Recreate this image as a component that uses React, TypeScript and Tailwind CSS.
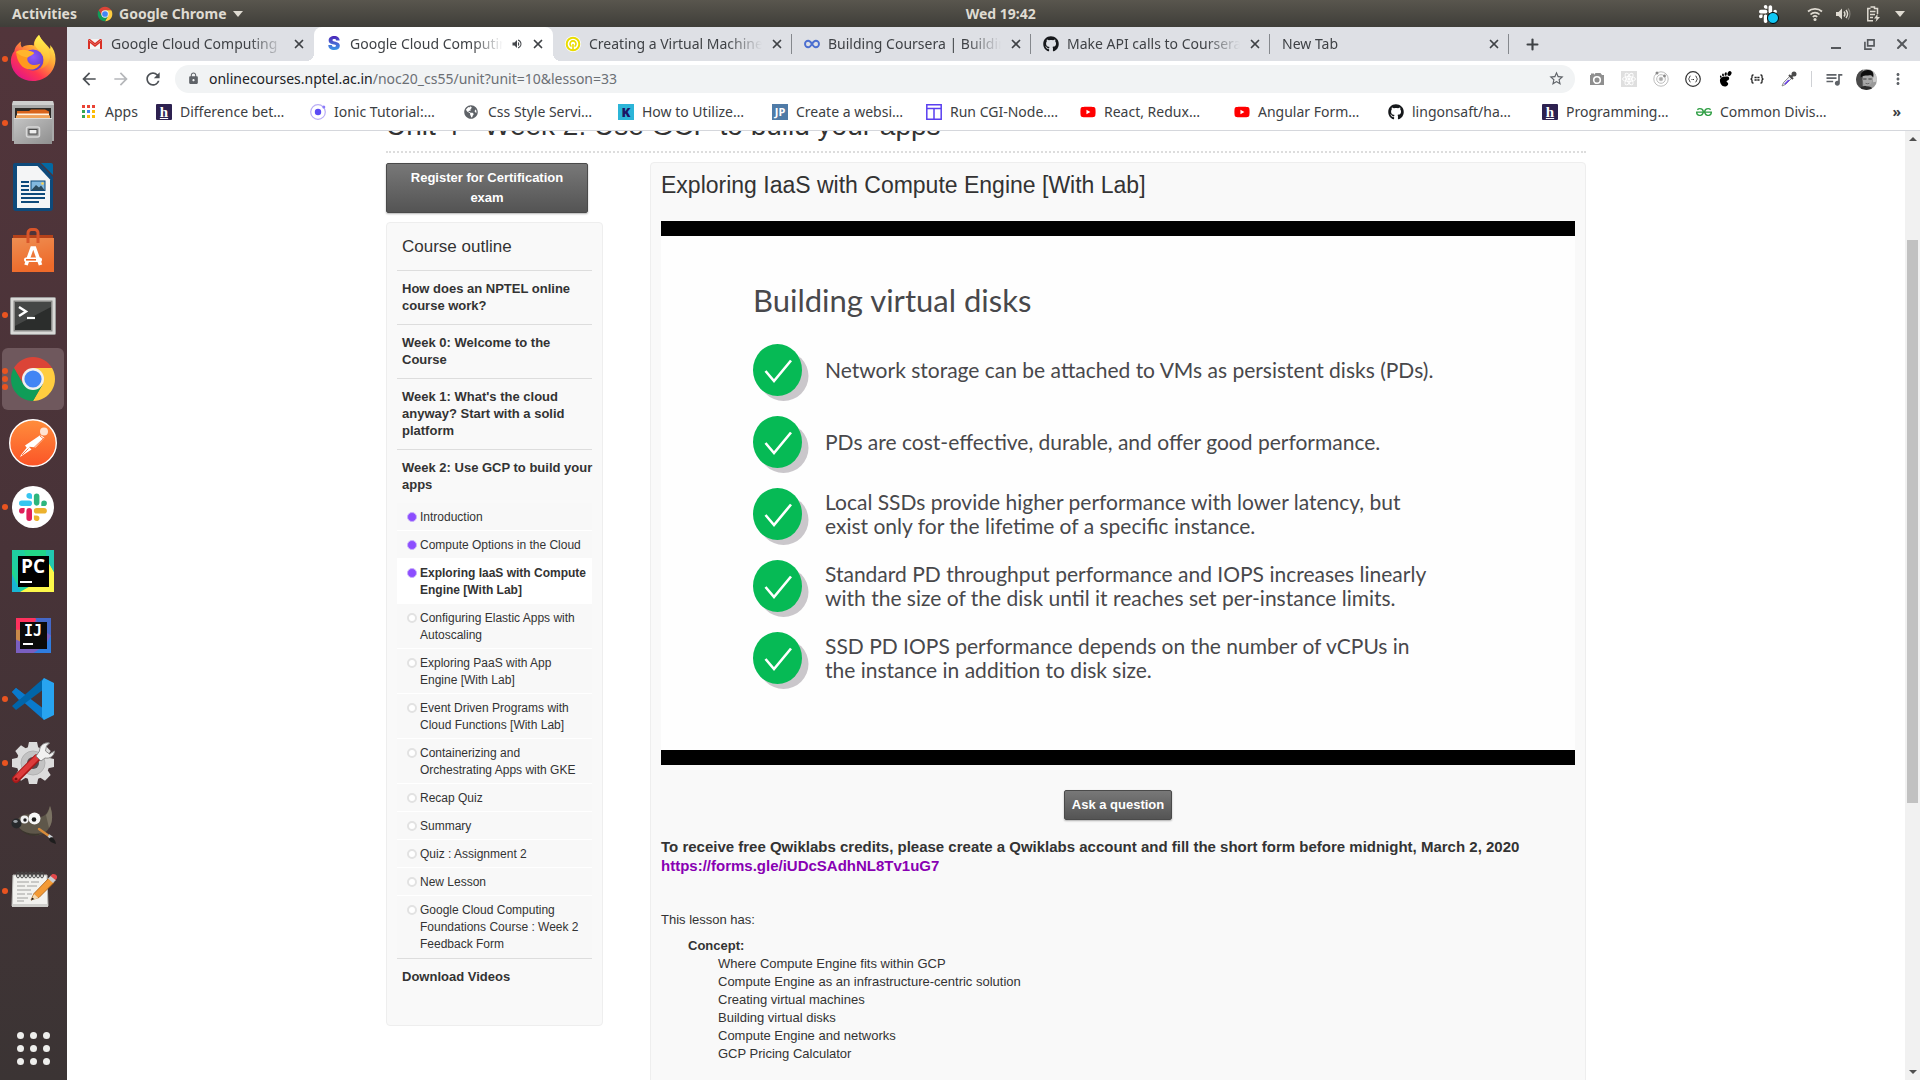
import React from "react";
import { Plus, X } from "lucide-react";
import { FaGithub, FaYoutube, FaGlobeAmericas } from "react-icons/fa";
import { SiGeeksforgeeks } from "react-icons/si";
import {
  MdArrowBack,
  MdArrowForward,
  MdRefresh,
  MdLock,
  MdStarBorder,
  MdQueueMusic,
  MdMoreVert,
  MdVolumeUp,
} from "react-icons/md";

/* ---------- Logos ---------- */

function ChromeLogo({ className }: { className: string }) {
  return (
    <svg viewBox="0 0 48 48" className={className} aria-hidden="true">
      <path d="M4.95 13A22 22 0 0 1 43.05 13H24L14.47 29.5Z" fill="#db4437" />
      <path d="M43.05 13A22 22 0 0 1 24 46L33.53 29.5L24 13Z" fill="#ffcd40" />
      <path d="M24 46A22 22 0 0 1 4.95 13L14.47 29.5H33.53Z" fill="#0f9d58" />
      <circle cx="24" cy="24" r="11" fill="#f1f1f1" />
      <circle cx="24" cy="24" r="8.6" fill="#4285f4" />
    </svg>
  );
}

function SlackMark({ className, colors }: { className: string; colors: [string, string, string, string] }) {
  const [blue, green, yellow, red] = colors;
  return (
    <svg viewBox="0 0 54 54" className={className} aria-hidden="true">
      <path d="M19.7.1a5.4 5.4 0 0 0 0 10.8h5.4V5.5A5.4 5.4 0 0 0 19.7.1m0 14.4H5.4a5.4 5.4 0 0 0 0 10.8h14.3a5.4 5.4 0 0 0 0-10.8" fill={blue} />
      <path d="M53.8 19.9a5.4 5.4 0 0 0-10.8 0v5.4h5.4a5.4 5.4 0 0 0 5.4-5.4m-14.4 0V5.5a5.4 5.4 0 0 0-10.7 0v14.4a5.4 5.4 0 0 0 10.7 0" fill={green} />
      <path d="M34 54a5.4 5.4 0 0 0 0-10.8h-5.3v5.4A5.4 5.4 0 0 0 34 54m0-14.4h14.4a5.4 5.4 0 0 0 0-10.8H34a5.4 5.4 0 0 0 0 10.8" fill={yellow} />
      <path d="M0 34.2a5.4 5.4 0 0 0 10.8 0v-5.4H5.4A5.4 5.4 0 0 0 0 34.2m14.3 0v14.4a5.4 5.4 0 0 0 10.8 0V34.2a5.4 5.4 0 0 0-10.8 0" fill={red} />
    </svg>
  );
}

function FirefoxLogo() {
  return (
    <svg viewBox="0 0 48 48" className="size-12" aria-hidden="true">
      <defs>
        <linearGradient id="ff-body" x1="0.85" y1="0.1" x2="0.2" y2="0.95">
          <stop offset="0" stopColor="#fff44f" />
          <stop offset="0.35" stopColor="#ffa436" />
          <stop offset="0.7" stopColor="#ff3750" />
          <stop offset="1" stopColor="#e31587" />
        </linearGradient>
        <linearGradient id="ff-flame" x1="0.5" y1="0" x2="0.4" y2="1">
          <stop offset="0" stopColor="#fff44f" />
          <stop offset="0.6" stopColor="#ffc53a" />
          <stop offset="1" stopColor="#ff8a1f" />
        </linearGradient>
        <radialGradient id="ff-globe" cx="0.5" cy="0.35" r="0.7">
          <stop offset="0" stopColor="#9059ff" />
          <stop offset="1" stopColor="#5b3ac2" />
        </radialGradient>
      </defs>
      <path d="M30 0c-4 4-5.500 7-5 10.500-6-1-10 0-12 2-1.500-2-1.500-4-1-6C7 10 5.500 14 5.500 16 2.500 19 1.500 24 2 28c1.500 11 11 18 22 18 13 0 22.500-10 22.500-22 0-6-2-10.500-5.500-14 .5 2 .4 3 0 4C38.500 10 33 6 30 0z" fill="url(#ff-body)" />
      <circle cx="24" cy="25" r="10.500" fill="url(#ff-globe)" />
      <path d="M30 0c-4 4-5 8-3.500 11.500 2 3.500 7 5.500 8 11.500 1 5-1 9-4 11 6-1 10-6 10.500-12C41 13 33 7 30 0z" fill="url(#ff-flame)" />
      <path d="M7 17c4-2.500 8-3 11.500-1.500 2.500 1 5 1 6.500 2.500-1 2-5 3-6.500 4.500-1 4 2 7 6 7.500 3.500.3 5-1 7-1.500-2 4-6 6.500-10.500 6C13 34 8 27 7 17z" fill="#ff9a1f" />
      <path d="M7 17c4-2.500 8-3 11.500-1.500 2.500 1 5 1 6.500 2.500-1 2-5 3-6.500 4.500C14 22 10 20 7 17z" fill="#ffb52e" />
    </svg>
  );
}

function FilesLogo() {
  return (
    <svg viewBox="0 0 48 48" className="size-12" aria-hidden="true">
      <defs>
        <linearGradient id="files-face" x1="0" y1="0" x2="1" y2="1">
          <stop offset="0" stopColor="#c4c4c4" />
          <stop offset="1" stopColor="#8f8f8f" />
        </linearGradient>
      </defs>
      <path d="M4 2h40l1 4v36H3V6z" fill="#a9a9a9" />
      <path d="M4 2h40l1 4H3z" fill="#cfcfcf" />
      <path d="M6 9h36v11H6z" fill="#2d2a28" />
      <path d="M8 12h12l2-1.500h14l4 2V20H8z" fill="#d9641c" />
      <path d="M8 14.500h32v2H8z" fill="#fff3e0" />
      <path d="M7 16.500h34V20H7z" fill="#f0a35a" />
      <path d="M5 19h38v26H5z" fill="url(#files-face)" />
      <path d="M5 19h38v1H5z" fill="#dedede" />
      <rect x="17.500" y="28" width="13" height="10" rx="2" fill="#a0a0a0" stroke="#d8d8d8" strokeWidth="1.500" />
      <rect x="20" y="30.500" width="8" height="4.500" fill="#eee" stroke="#4a4a4a" />
    </svg>
  );
}

function WriterLogo() {
  return (
    <svg viewBox="0 0 48 48" className="size-12" aria-hidden="true">
      <path d="M6 0h24.500L44 14v31a3 3 0 0 1-3 3H7a3 3 0 0 1-3-3V2a2 2 0 0 1 2-2z" fill="#0e4a7b" />
      <path d="M32 0h10a2 2 0 0 1 2 2v10z" fill="#0369a3" />
      <path d="M8 3h20.500L41 16.500V45H8z" fill="#f4f5f6" />
      <path d="M12 18h8v2h-8zM12 22h8v2h-8zM12 26h8v2h-8zM12 30h24v2H12zM12 34h24v2H12zM12 38h18v2H12z" fill="#0e4a7b" />
      <rect x="22" y="18" width="14" height="9.500" fill="#83b8de" stroke="#0e4a7b" />
      <path d="M22.500 27l4.500-5 3 2.500 2-2 3.500 4.500z" fill="#2c4a5c" />
      <circle cx="33.500" cy="20.500" r="1.300" fill="#ffd34f" />
    </svg>
  );
}

function SoftwareLogo() {
  return (
    <svg viewBox="0 0 48 48" className="size-12" aria-hidden="true">
      <defs>
        <linearGradient id="bag" x1="0" y1="0" x2="0.3" y2="1">
          <stop offset="0" stopColor="#ee8e52" />
          <stop offset="1" stopColor="#ee6a2a" />
        </linearGradient>
      </defs>
      <path d="M4 8h40v8H4z" fill="#b5421a" />
      <path d="M3 11h42v34H3z" fill="url(#bag)" />
      <path d="M19 16V6a3.500 3.500 0 0 1 3.500-3.500h3A3.500 3.500 0 0 1 29 6v10" fill="none" stroke="#d8552a" strokeWidth="3" />
      <path d="M17 38l6-17h2.500l6 17" fill="none" stroke="#fff" strokeWidth="3.600" />
      <rect x="15" y="30.500" width="18" height="4.500" rx="2" fill="#fff" />
      <rect x="17" y="32" width="10" height="1.600" fill="#ee6a2a" />
    </svg>
  );
}

function TerminalLogo() {
  return (
    <svg viewBox="0 0 48 48" className="size-12" aria-hidden="true">
      <rect x="1.500" y="6.500" width="45" height="37" rx="1" fill="#d9d9d7" stroke="#9b9b9b" />
      <rect x="4.500" y="9.500" width="39" height="31" fill="#8a8a88" />
      <rect x="6" y="11" width="36" height="28" fill="#2b2d2c" />
      <path d="M6 11h36v5L6 35z" fill="#454746" />
      <path d="M10 16l7 4.500-7 4.500" fill="none" stroke="#fff" strokeWidth="2.400" />
      <path d="M18 27h8" stroke="#fff" strokeWidth="2.200" />
    </svg>
  );
}

function PostmanLogo() {
  return (
    <svg viewBox="0 0 48 48" className="size-12" aria-hidden="true">
      <defs>
        <linearGradient id="postman" x1="0" y1="0" x2="0" y2="1">
          <stop offset="0" stopColor="#ff8e3c" />
          <stop offset="1" stopColor="#fb5427" />
        </linearGradient>
      </defs>
      <circle cx="24" cy="24" r="23.300" fill="url(#postman)" stroke="#fff" strokeWidth="1.400" />
      <circle cx="35" cy="12.500" r="4" fill="#ffe3d2" />
      <path d="M32.500 16.500l3 2.500-9 9.500-8-1z" fill="#fff" />
      <path d="M31.500 16L16 26.500l2 2.500 13-8z" fill="#fff" />
      <path d="M19 27l3.500 3.500L11 38l1-2z" fill="#fff" />
      <path d="M35 19l-11 10.500M19.500 29.500L13 36M31 17l3 2.500" stroke="#fb7a45" fill="none" />
    </svg>
  );
}

function PyCharmLogo() {
  return (
    <span className="relative flex h-[42px] w-[42px] items-center justify-center">
      <svg viewBox="0 0 42 42" className="absolute inset-0 size-full" aria-hidden="true">
        <path d="M0 0h42v42H0z" fill="#21d789" />
        <path d="M0 14L8 42h14L12 0H0z" fill="#1fcfa0" />
        <path d="M0 24l9 18H0z" fill="#18b6d4" />
        <path d="M8 42l14-8 12-26 8 14v20z" fill="#fcf84a" />
        <path d="M34 0h8v22l-8-14z" fill="#22c8b0" />
      </svg>
      <span className="relative flex h-[31px] w-[31px] flex-col justify-between bg-black px-[2px] pb-1">
        <span className="font-['Open_Sans',sans-serif] text-[19px] leading-[20px] font-bold text-white">PC</span>
        <span className="h-[2px] w-3 bg-white" />
      </span>
    </span>
  );
}

function IntelliJLogo() {
  return (
    <span className="relative flex size-[35px] items-center justify-center">
      <svg viewBox="0 0 36 36" className="absolute inset-0 size-full" aria-hidden="true">
        <path d="M0 0h36v36H0z" fill="#7a5fc0" />
        <path d="M0 0h22L12 14H0z" fill="#fe315d" />
        <path d="M20 0h16v18L24 10z" fill="#4468c8" />
        <path d="M0 12h8v14L0 22z" fill="#c98a4a" />
        <path d="M36 18v18H18l12-8z" fill="#2f7de0" />
      </svg>
      <span className="relative flex size-[27px] flex-col justify-between bg-[#0b0b0b] px-[3px] pb-1">
        <span className="font-['DejaVu_Sans_Mono',monospace] text-[15px] leading-[18px] font-bold text-white">IJ</span>
        <span className="h-[2px] w-[10px] bg-white" />
      </span>
    </span>
  );
}

function CodeLogo() {
  return (
    <svg viewBox="0 0 48 48" className="size-12" aria-hidden="true">
      <path d="M3 17l4-4 28 21v11z" fill="#0a7acc" />
      <path d="M3 31l4 4L35 14V3z" fill="#0065a9" />
      <path d="M3 17l4-4 9 7-6 5z" fill="#0a7acc" />
      <path d="M35 3l10 5v32l-10 5-2-3V6z" fill="#28a4f0" />
    </svg>
  );
}

function SettingsLogo() {
  const teeth = [0, 45, 90, 135, 180, 225, 270, 315];
  return (
    <svg viewBox="0 0 48 48" className="size-12" aria-hidden="true">
      {teeth.map((a) => (
        <path key={a} d="M20 3h8l2 9H18z" fill="#dcdcdc" transform={`rotate(${a} 24 24)`} />
      ))}
      <circle cx="24" cy="24" r="16.500" fill="#dcdcdc" />
      <circle cx="24" cy="24" r="12" fill="#c3c3c3" stroke="#b2b2b2" />
      <circle cx="24" cy="24" r="6" fill="#55494c" />
      <path d="M7 40l21-21" stroke="#a81818" strokeWidth="7.500" strokeLinecap="round" />
      <path d="M7 39.500l21-21" stroke="#dd3b3b" strokeWidth="5" strokeLinecap="round" />
      <path d="M27 17l5 5 4-3c5 1 9-2 9.500-7l-5 3-4-3 1-5 3-3c-6-1-10 3-10 8z" fill="#f1f1f1" stroke="#8c8c8c" />
      <circle cx="7" cy="40" r="1.600" fill="#7a1010" />
    </svg>
  );
}

function GimpLogo() {
  return (
    <svg viewBox="0 0 48 48" className="size-12" aria-hidden="true">
      <path d="M9 16c3-4 8-6 14-3 5 2 11 2 15-3 1-2 2-4 3-7 3 8 3 16-1 22-4 7-13 9-20 6-6-2-9-5-11-8z" fill="#5e574a" />
      <path d="M37 12c2-2 3-5 4-9 3 8 3 16-1 22z" fill="#7a7263" />
      <path d="M11 26c5 4 13 6 23 4-6 4-17 4-23-4z" fill="#3b362d" />
      <ellipse cx="7.500" cy="20.500" rx="5" ry="5" fill="#26282b" />
      <ellipse cx="6.500" cy="18.500" rx="2.200" ry="1.400" fill="#9a9fa5" />
      <circle cx="15.500" cy="16.500" r="4" fill="#f0f0f0" />
      <circle cx="25.500" cy="15.500" r="6" fill="#f7f7f7" />
      <circle cx="16" cy="17" r="1.700" fill="#1c1c1c" />
      <circle cx="25" cy="16.500" r="2.300" fill="#1c1c1c" />
      <path d="M30 26l10 7" stroke="#d98b3a" strokeWidth="2.400" strokeLinecap="round" />
      <path d="M39.500 32.500l3.500 2.500" stroke="#c9ced3" strokeWidth="3" />
      <path d="M42 34c3 1 4.500 4 5 7-4-1-7-3-7-5z" fill="#1d1d1d" />
    </svg>
  );
}

function NotesLogo() {
  const rings = [9, 13, 17, 21, 25, 29, 33];
  return (
    <svg viewBox="0 0 48 48" className="size-12" aria-hidden="true">
      <path d="M4 8h34l1 31H3z" fill="#f2f2ef" stroke="#b9b9b6" />
      <path d="M3 37h36v3H3z" fill="#cfcfcc" />
      {rings.map((x) => (
        <ellipse key={x} cx={x} cy="8" rx="1.500" ry="3" fill="none" stroke="#4a4a4a" />
      ))}
      <path d="M8 15h12M22 15h8M8 19h8M18 19h10M8 23h14M8 27h8M18 27h5M8 31h11M8 34h7" stroke="#a0a09e" />
      <path d="M22 33l3-6.500L40 11l5 4.500-15 15z" fill="#f39a35" stroke="#a85c10" strokeWidth="0.800" />
      <path d="M25 27l-3 6.500 7.500-2.500z" fill="#f3d9b0" />
      <path d="M22 33.500l1.200-3 2 1.600z" fill="#1d1d1d" />
      <path d="M39 11.500l3-3 5 4.500-3 3z" fill="#c8ccd0" />
      <path d="M41.500 9c1.500-3 5-2.500 6.500 0 .5 1.500 0 2.500-1.500 4z" fill="#e0484a" />
    </svg>
  );
}

/* ---------- Top bar ---------- */

function TopBar() {
  return (
    <header className="flex h-[27px] shrink-0 items-center justify-between bg-linear-to-b from-[#59564e] to-[#3f3e39] px-3 font-['Noto_Sans',sans-serif] text-[14px] font-bold text-[#dfdbd2]">
      <div className="flex items-center gap-5">
        <button type="button">Activities</button>
        <button type="button" className="flex items-center gap-[6px]">
          <ChromeLogo className="size-4" />
          <span>Google Chrome</span>
          <Triangle />
        </button>
      </div>
      <button type="button">Wed 19:42</button>
      <div className="flex items-center">
        <span className="relative mr-[30px] flex">
          <SlackMark className="size-[18px]" colors={["#fff", "#fff", "#fff", "#fff"]} />
          <span className="absolute top-[7px] left-2 size-3 rounded-full border border-black bg-[#11c8f5]" />
        </span>
        <svg viewBox="0 0 16 16" className="mr-3 size-4" fill="none" stroke="currentColor" aria-hidden="true">
          <path d="M1 5.500a10.500 10.500 0 0 1 14 0M3.500 8.500a6.500 6.500 0 0 1 9 0M5.800 11a3.200 3.200 0 0 1 4.400 0" strokeWidth="1.700" />
          <circle cx="8" cy="13.500" r="1.500" fill="currentColor" stroke="none" />
        </svg>
        <svg viewBox="0 0 16 16" className="mr-[14px] size-4" fill="none" stroke="currentColor" aria-hidden="true">
          <path d="M1 6h2.500L7 2.500v11L3.500 10H1z" fill="currentColor" stroke="none" />
          <path d="M9 5.500a4 4 0 0 1 0 5M11 4a6.500 6.500 0 0 1 0 8" strokeWidth="1.400" />
          <path d="M13 2.500a9 9 0 0 1 0 11" strokeWidth="1.300" opacity="0.4" />
        </svg>
        <svg viewBox="0 0 16 16" className="mr-[14px] size-4" fill="none" stroke="currentColor" strokeWidth="1.500" aria-hidden="true">
          <path d="M5.500 1h4v1.500h3V8M8 14.800H2.800V2.500H5.500M5 5.500h5.500M5 8.500h5M5 11.500h3" />
          <path d="M12.500 8L9 12.500h2.500L10.500 16l4.500-5h-2.500z" fill="currentColor" stroke="none" />
        </svg>
        <span className="mr-[3px]">
          <Triangle />
        </span>
      </div>
    </header>
  );
}

function Triangle() {
  return (
    <svg viewBox="0 0 10 6" className="h-[6px] w-[10px]" aria-hidden="true">
      <path d="M0 0h10L5 6z" fill="currentColor" />
    </svg>
  );
}

/* ---------- Dock ---------- */

const dockItems: { name: string; icon: React.ReactNode; dots: number; active?: boolean }[] = [
  { name: "Firefox", icon: <FirefoxLogo />, dots: 1 },
  { name: "Files", icon: <FilesLogo />, dots: 1 },
  { name: "LibreOffice Writer", icon: <WriterLogo />, dots: 0 },
  { name: "Ubuntu Software", icon: <SoftwareLogo />, dots: 0 },
  { name: "Terminal", icon: <TerminalLogo />, dots: 1 },
  { name: "Google Chrome", icon: <ChromeLogo className="size-12" />, dots: 3, active: true },
  { name: "Postman", icon: <PostmanLogo />, dots: 0 },
  {
    name: "Slack",
    icon: (
      <span className="flex size-[42px] items-center justify-center rounded-full bg-white">
        <SlackMark className="size-7" colors={["#36c5f0", "#2eb67d", "#ecb22e", "#e01e5a"]} />
      </span>
    ),
    dots: 1,
  },
  { name: "PyCharm", icon: <PyCharmLogo />, dots: 0 },
  { name: "IntelliJ IDEA", icon: <IntelliJLogo />, dots: 0 },
  { name: "Visual Studio Code", icon: <CodeLogo />, dots: 1 },
  { name: "Settings", icon: <SettingsLogo />, dots: 1 },
  { name: "GIMP", icon: <GimpLogo />, dots: 0 },
  { name: "Text Editor", icon: <NotesLogo />, dots: 1 },
];

function Dock() {
  return (
    <nav aria-label="Dock" className="flex w-[67px] shrink-0 flex-col bg-linear-to-b from-[#52353b] via-[#483338] to-[#3b3434]">
      {dockItems.map((item) => (
        <button
          key={item.name}
          type="button"
          aria-label={item.name}
          className="relative flex h-16 shrink-0 items-center justify-center p-px pr-[2px]"
        >
          <span
            className={
              item.active
                ? "flex size-[62px] items-center justify-center rounded-md bg-[#6f585d]"
                : "flex size-[62px] items-center justify-center"
            }
          >
            {item.icon}
          </span>
          <span className="absolute inset-y-0 left-[2px] flex flex-col items-center justify-center gap-[2px]">
            {Array.from({ length: item.dots }, (_, i) => (
              <span key={i} className="size-[6px] rounded-full bg-[#e95420]" />
            ))}
          </span>
        </button>
      ))}
      <button type="button" aria-label="Show Applications" className="mt-auto flex h-16 items-center justify-center pr-px">
        <span className="grid grid-cols-3 gap-[6px]">
          {Array.from({ length: 9 }, (_, i) => (
            <span key={i} className="size-[7px] rounded-full bg-[#eeeeec]" />
          ))}
        </span>
      </button>
    </nav>
  );
}

/* ---------- Tab strip ---------- */

function GmailIcon() {
  return (
    <svg viewBox="0 0 16 16" className="size-4 shrink-0" aria-hidden="true">
      <path d="M2 3h12v10H2z" fill="#f4f4f4" />
      <path d="M1 13V3.500l7 5.500 7-5.500V13h-2V7l-5 4-5-4v6z" fill="#d93025" />
      <path d="M1 3h2l5 4 5-4h2l-7 6z" fill="#d93025" />
    </svg>
  );
}

const tabs: { title: string; icon: React.ReactNode; active?: boolean; sep?: boolean }[] = [
  { title: "Google Cloud Computing", icon: <GmailIcon /> },
  {
    title: "Google Cloud Computing",
    icon: (
      <span className="w-4 shrink-0 bg-linear-to-b from-[#4a1fb8] to-[#2aa5ee] bg-clip-text text-center font-['Inter',sans-serif] text-[19px] leading-4 font-black text-transparent">
        S
      </span>
    ),
    active: true,
  },
  {
    title: "Creating a Virtual Machine",
    icon: (
      <svg viewBox="0 0 16 16" className="size-4 shrink-0" fill="none" aria-hidden="true">
        <circle cx="8" cy="8" r="8" fill="#fff" />
        <circle cx="8" cy="8" r="6.300" stroke="#e9dc00" strokeWidth="2" />
        <path d="M6.500 10.500a3 3 0 1 1 3 0M8 8v6" stroke="#e9dc00" strokeWidth="1.600" />
      </svg>
    ),
    sep: true,
  },
  {
    title: "Building Coursera | Building",
    icon: (
      <svg viewBox="0 0 16 16" className="size-4 shrink-0" fill="none" aria-hidden="true">
        <path d="M8 8C6.500 5.500 5.500 4.800 4.200 4.800a3.200 3.200 0 0 0 0 6.400C5.500 11.200 6.500 10.500 8 8s2.500-3.200 3.800-3.200a3.200 3.200 0 0 1 0 6.400C10.500 11.200 9.500 10.500 8 8z" stroke="#4c6fd0" strokeWidth="1.900" />
      </svg>
    ),
    sep: true,
  },
  { title: "Make API calls to Coursera", icon: <FaGithub className="size-4 shrink-0 text-[#16181b]" />, sep: true },
  { title: "New Tab", icon: null, sep: true },
];

function TabStrip() {
  return (
    <div className="flex h-[34px] shrink-0 bg-[#dee0e5] pl-2 text-[14px] text-[#3f4246]">
      <div role="tablist" className="flex min-w-0 flex-1">
        {tabs.map((tab, i) => (
          <div
            key={i}
            role="tab"
            aria-selected={!!tab.active}
            className={
              tab.active
                ? "relative flex max-w-[239px] min-w-0 flex-1 items-center gap-2 rounded-t-lg bg-white pr-[8px] pb-px pl-3"
                : "relative flex max-w-[239px] min-w-0 flex-1 items-center gap-2 pr-[8px] pb-px pl-3"
            }
          >
            {tab.icon}
            <span className="min-w-0 flex-1 overflow-hidden [mask-image:linear-gradient(to_right,#000_80%,transparent)] whitespace-nowrap">
              {tab.title}
            </span>
            {tab.active && <MdVolumeUp className="size-3 shrink-0 text-[#45484c]" />}
            <button type="button" aria-label="Close tab" className="shrink-0">
              <X className="size-[14px] text-[#3f4246]" strokeWidth={3} />
            </button>
            {tab.active && (
              <>
                <span className="absolute bottom-0 -left-2 size-2 bg-[radial-gradient(circle_at_0_0,#dee0e5_8px,white_8px)]" />
                <span className="absolute -right-2 bottom-0 size-2 bg-[radial-gradient(circle_at_100%_0,#dee0e5_8px,white_8px)]" />
              </>
            )}
            {tab.sep && <span className="absolute top-[7px] right-0 h-5 w-px bg-[#85888d]" />}
          </div>
        ))}
        <button type="button" aria-label="New tab" className="flex w-[46px] shrink-0 items-center justify-center">
          <Plus className="size-[17px]" strokeWidth={3} />
        </button>
      </div>
      <div className="flex items-center gap-[17px] pr-[10px] text-[#55585c]">
        <button type="button" aria-label="Minimize" className="flex h-4 w-4 items-end justify-center pb-[3px]">
          <span className="h-[2px] w-[10px] bg-current" />
        </button>
        <button type="button" aria-label="Restore" className="flex size-4 items-center justify-center">
          <svg viewBox="0 0 12 12" className="size-[11px]" fill="none" stroke="currentColor" strokeWidth="1.800" aria-hidden="true">
            <path d="M4 1h7v6.500H4zM1 3v8h7.500" />
          </svg>
        </button>
        <button type="button" aria-label="Close window">
          <X className="size-4" strokeWidth={3} />
        </button>
      </div>
    </div>
  );
}

/* ---------- Toolbar ---------- */

const extensions: { name: string; icon: React.ReactNode }[] = [
  {
    name: "Screenshot",
    icon: (
      <svg viewBox="0 0 16 16" className="size-4" aria-hidden="true">
        <path d="M1 4h1V2.500h3V4l1.500-2h5L13 4h2v10H1z" fill="#8f8f8f" />
        <circle cx="8" cy="9" r="3.300" fill="#8f8f8f" stroke="#fff" strokeWidth="1.600" />
      </svg>
    ),
  },
  {
    name: "React Developer Tools",
    icon: (
      <svg viewBox="0 0 16 16" className="size-4" fill="none" stroke="#fff" strokeWidth="0.900" aria-hidden="true">
        <path d="M0 0h16v16H0z" fill="#dfdfdf" stroke="none" />
        <ellipse cx="8" cy="8" rx="6.500" ry="2.500" />
        <ellipse cx="8" cy="8" rx="6.500" ry="2.500" transform="rotate(60 8 8)" />
        <ellipse cx="8" cy="8" rx="6.500" ry="2.500" transform="rotate(120 8 8)" />
        <circle cx="8" cy="8" r="1.200" fill="#fff" />
      </svg>
    ),
  },
  {
    name: "Orbit",
    icon: (
      <svg viewBox="0 0 16 16" className="size-4" fill="none" stroke="#bdbdbd" aria-hidden="true">
        <circle cx="8" cy="8" r="7.200" />
        <circle cx="8" cy="8" r="4.300" />
        <circle cx="8" cy="8" r="1.800" fill="#aaa" />
        <circle cx="4" cy="2" r="1.500" fill="#8a8a8a" stroke="none" />
        <circle cx="11.500" cy="5" r="1.400" fill="#8a8a8a" stroke="none" />
      </svg>
    ),
  },
  {
    name: "JSON Viewer",
    icon: (
      <svg viewBox="0 0 16 16" className="size-4" fill="none" stroke="#333" aria-hidden="true">
        <circle cx="8" cy="8" r="7.300" strokeWidth="1.200" />
        <path d="M5.500 5c-1.500 0-.5 2.500-2 3 1.500.5.500 3 2 3M10.500 5c1.500 0 .5 2.500 2 3-1.500.5-.5 3-2 3" />
        <path d="M6.500 8.500h3" strokeDasharray="1 0.500" />
      </svg>
    ),
  },
  {
    name: "GNOME Shell integration",
    icon: (
      <svg viewBox="0 0 16 16" className="size-4" fill="#000" aria-hidden="true">
        <path d="M10.500 5.500C13 6 12.500 9 10.500 9.500 9 10 9.500 11 10.500 11.500c1.500 1 .5 3.500-2 4C5 16 2.500 12 3 8.500 3.500 6 7 5 10.500 5.500z" />
        <ellipse cx="12.500" cy="2.500" rx="1.900" ry="2.500" transform="rotate(25 12.500 2.500)" />
        <ellipse cx="8.700" cy="3" rx="1.100" ry="1.800" transform="rotate(10 8.700 3)" />
        <ellipse cx="6" cy="4" rx="0.900" ry="1.500" transform="rotate(-5 6 4)" />
        <ellipse cx="3.800" cy="5.700" rx="0.800" ry="1.200" transform="rotate(-20 3.800 5.700)" />
      </svg>
    ),
  },
  {
    name: "JSON Formatter",
    icon: (
      <svg viewBox="0 0 16 16" className="size-4" fill="none" stroke="#222" strokeWidth="1.300" aria-hidden="true">
        <path d="M4.500 4H4Q3 4 3 5v1.500Q3 8 1.500 8 3 8 3 9.500V11q0 1 1 1h.5M11.500 4h.5q1 0 1 1v1.500Q13 8 14.500 8 13 8 13 9.500V11q0 1-1 1h-.5" />
        <path d="M5.500 6.500h5M5.500 9h5" strokeDasharray="2.200 0.600" />
      </svg>
    ),
  },
  {
    name: "Color picker",
    icon: (
      <svg viewBox="0 0 16 16" className="size-4" fill="none" aria-hidden="true">
        <path d="M1 15l1.500-3.500L9 5l2 2-6.500 6.500z" fill="#e8e8ef" stroke="#777" strokeWidth="0.800" />
        <path d="M3 13l4-4 2 0-4.500 4.500z" fill="#6a3df0" />
        <path d="M8 4l4 4M10 6l3.500-3.500" stroke="#4a4a4a" strokeWidth="2" />
        <circle cx="13" cy="3" r="2.500" fill="#4a4a4a" />
      </svg>
    ),
  },
];

function Toolbar() {
  return (
    <div className="flex h-9 shrink-0 items-center bg-white pr-[6px] pl-[6px] text-[#5f6368]">
      <button type="button" aria-label="Back" className="flex w-8 justify-center">
        <MdArrowBack className="size-5 text-[#4d5156]" />
      </button>
      <button type="button" aria-label="Forward" className="flex w-8 justify-center">
        <MdArrowForward className="size-5 text-[#b5b7ba]" />
      </button>
      <button type="button" aria-label="Reload" className="flex w-8 justify-center">
        <MdRefresh className="size-5 text-[#4d5156]" />
      </button>
      <div className="mx-[6px] flex h-7 min-w-0 flex-1 items-center rounded-full bg-[#f1f3f4] pr-[10px] pb-px pl-3">
        <MdLock className="size-[13px] shrink-0" />
        <a
          href="#lesson"
          className="ml-[9px] min-w-0 flex-1 overflow-hidden text-[14px] whitespace-nowrap text-[#6b6f74]"
        >
          <span className="text-[#202124]">onlinecourses.nptel.ac.in</span>/noc20_cs55/unit?unit=10&amp;lesson=33
        </a>
        <button type="button" aria-label="Bookmark this page">
          <MdStarBorder className="size-[17px]" />
        </button>
      </div>
      {extensions.map((e) => (
        <button key={e.name} type="button" aria-label={e.name} className="flex w-8 justify-center">
          {e.icon}
        </button>
      ))}
      <span className="mx-[6px] h-4 w-px bg-[#cfd1d5]" />
      <button type="button" aria-label="Media controls" className="flex w-8 justify-center">
        <MdQueueMusic className="size-5" />
      </button>
      <button type="button" aria-label="Profile" className="flex w-8 justify-center">
        <svg viewBox="0 0 22 22" className="size-[21px] rounded-full" aria-hidden="true">
          <path d="M0 0h22v22H0z" fill="#9a9a9a" />
          <path d="M0 0h7v22H0z" fill="#4a4a4a" />
          <path d="M17 3l5 2v8l-4 1z" fill="#c9c9c9" />
          <ellipse cx="12" cy="11" rx="5" ry="6.500" fill="#a8a8a8" />
          <path d="M5 9c-1-5 3-8.500 8-8 5 0 6 4 5 8-1-2-2-2.500-3-2.500-3 .5-7-.5-10 2.500z" fill="#0f0f0f" />
          <path d="M7.500 10.500h3.500M13 10.500h3.500" stroke="#3a3a3a" strokeWidth="1.200" />
          <path d="M10 15q2 1 4 0" fill="none" stroke="#666" />
          <path d="M3 22c1-3 4-5 8-4 4 0 6 1 7 4z" fill="#2c2c2c" />
        </svg>
      </button>
      <button type="button" aria-label="Menu" className="flex w-8 justify-center">
        <MdMoreVert className="size-[18px]" />
      </button>
    </div>
  );
}

/* ---------- Bookmarks ---------- */

function HIcon() {
  return (
    <span className="flex size-4 shrink-0 items-center justify-center rounded-[1px] bg-[#2d2150] font-['Liberation_Serif',serif] text-[15px] leading-4 font-bold text-white underline decoration-1 underline-offset-1">
      h
    </span>
  );
}

const youtube = <FaYoutube className="size-4 shrink-0 text-[#ff0000]" />;

const bookmarks: { label: string; icon: React.ReactNode }[] = [
  { label: "Difference bet…", icon: <HIcon /> },
  {
    label: "Ionic Tutorial:…",
    icon: (
      <svg viewBox="0 0 16 16" className="size-4 shrink-0" fill="none" aria-hidden="true">
        <circle cx="8" cy="8" r="7.300" stroke="#b9adf5" strokeWidth="1.200" />
        <circle cx="8" cy="8" r="3.200" fill="#5b4bf5" />
        <circle cx="13.800" cy="3" r="1.500" fill="#8a7bfa" />
      </svg>
    ),
  },
  { label: "Css Style Servi…", icon: <FaGlobeAmericas className="mr-[2px] size-[14px] shrink-0 text-[#5f6368]" /> },
  {
    label: "How to Utilize…",
    icon: (
      <span className="flex size-4 shrink-0 items-center justify-center bg-[#2cb5d8] text-[13px] leading-4 font-black text-[#1c1464]">
        K
      </span>
    ),
  },
  {
    label: "Create a websi…",
    icon: (
      <span className="flex size-4 shrink-0 items-center justify-center bg-[#4f7ba7] text-[11px] leading-4 font-bold text-white">
        JP
      </span>
    ),
  },
  {
    label: "Run CGI-Node.…",
    icon: (
      <svg viewBox="0 0 16 16" className="size-4 shrink-0" fill="none" stroke="#5a3ff0" strokeWidth="1.500" aria-hidden="true">
        <path d="M.8.8h14.400v14.400H.8zM.8 4.500h14.400M8 4.500v10.700" />
      </svg>
    ),
  },
  { label: "React, Redux…", icon: youtube },
  { label: "Angular Form…", icon: youtube },
  { label: "lingonsaft/ha…", icon: <FaGithub className="size-4 shrink-0 text-[#16181b]" /> },
  { label: "Programming…", icon: <HIcon /> },
  { label: "Common Divis…", icon: <SiGeeksforgeeks className="size-4 shrink-0 text-[#2f9e44]" /> },
];

const appColors = [
  "bg-[#ea4335]", "bg-[#ea4335]", "bg-[#ea4335]",
  "bg-[#34a853]", "bg-[#4285f4]", "bg-[#fbbc05]",
  "bg-[#34a853]", "bg-[#fbbc05]", "bg-[#fbbc05]",
];

function BookmarksBar() {
  return (
    <div className="flex h-[34px] shrink-0 items-center border-b border-[#d5d7dc] bg-white pr-[19px] pb-1 pl-[15px] text-[14px] text-[#3c4043]">
      <a href="#apps" className="flex w-[74px] shrink-0 items-center gap-[10px]">
        <span className="grid grid-cols-3 gap-[2px]">
          {appColors.map((c, i) => (
            <span key={i} className={`size-[3px] ${c}`} />
          ))}
        </span>
        Apps
      </a>
      {bookmarks.map((b) => (
        <a key={b.label} href="#bookmark" className="flex w-[154px] min-w-0 items-center gap-2 whitespace-nowrap">
          {b.icon}
          {b.label}
        </a>
      ))}
      <button type="button" aria-label="More bookmarks" className="ml-auto font-bold">
        »
      </button>
    </div>
  );
}

/* ---------- Course page ---------- */

const lessons: { title: string; done: boolean; current?: boolean }[] = [
  { title: "Introduction", done: true },
  { title: "Compute Options in the Cloud", done: true },
  { title: "Exploring IaaS with Compute Engine [With Lab]", done: true, current: true },
  { title: "Configuring Elastic Apps with Autoscaling", done: false },
  { title: "Exploring PaaS with App Engine [With Lab]", done: false },
  { title: "Event Driven Programs with Cloud Functions [With Lab]", done: false },
  { title: "Containerizing and Orchestrating Apps with GKE", done: false },
  { title: "Recap Quiz", done: false },
  { title: "Summary", done: false },
  { title: "Quiz : Assignment 2", done: false },
  { title: "New Lesson", done: false },
  { title: "Google Cloud Computing Foundations Course : Week 2 Feedback Form", done: false },
];

function UnitLink({ children }: { children: React.ReactNode }) {
  return (
    <a href="#unit" className="block border-t border-[#dddddd] pt-[9px] pb-[10px] pl-[5px] text-[13px] leading-[17px] font-bold">
      {children}
    </a>
  );
}

function Outline() {
  return (
    <nav aria-label="Course outline" className="mt-[9px] rounded-[4px] border border-[#eeeeee] bg-[#f9f9f9] px-[10px] pb-[30px]">
      <h2 className="py-3 pl-[5px] text-[17px] leading-[23px]">Course outline</h2>
      <UnitLink>How does an NPTEL online course work?</UnitLink>
      <UnitLink>Week 0: Welcome to the Course</UnitLink>
      <UnitLink>Week 1: What's the cloud anyway? Start with a solid platform</UnitLink>
      <UnitLink>
        <span className="whitespace-nowrap">Week 2: Use GCP to build your</span> apps
      </UnitLink>
      <ul className="bg-[#f8f8f8]">
        {lessons.map((l) => (
          <li key={l.title} className="border-b border-white last:border-transparent">
            <a
              href="#lesson"
              aria-current={l.current ? "page" : undefined}
              className={
                l.current
                  ? "flex gap-[3px] bg-white pt-[6px] pb-1 pl-[10px] text-[12px] leading-[17px] font-bold"
                  : "flex gap-[3px] pt-[6px] pb-1 pl-[10px] text-[12px] leading-[17px]"
              }
            >
              <span
                className={
                  l.done
                    ? "mt-[3px] size-[10px] shrink-0 rounded-full border border-[#c9b0fb] bg-[#8c4dff]"
                    : "mt-[3px] size-[10px] shrink-0 rounded-full border-2 border-[#e2e2e2] bg-white"
                }
              />
              {l.title}
            </a>
          </li>
        ))}
      </ul>
      <UnitLink>Download Videos</UnitLink>
    </nav>
  );
}

const slidePoints: string[][] = [
  ["Network storage can be attached to VMs as persistent disks (PDs)."],
  ["PDs are cost-effective, durable, and offer good performance."],
  ["Local SSDs provide higher performance with lower latency, but", "exist only for the lifetime of a specific instance."],
  ["Standard PD throughput performance and IOPS increases linearly", "with the size of the disk until it reaches set per-instance limits."],
  ["SSD PD IOPS performance depends on the number of vCPUs in", "the instance in addition to disk size."],
];

function Slide() {
  return (
    <section
      aria-label="Lecture video"
      className="mt-[22px] border-y-[15px] border-black bg-[#fefefe] pt-11 pr-4 pb-14 pl-[92px] font-['Lato',sans-serif] text-[#48484b]"
    >
      <h3 className="text-[31px] leading-10">Building virtual disks</h3>
      <ul className="mt-[14px]">
        {slidePoints.map((lines) => (
          <li key={lines[0]} className="flex h-[72px] items-center gap-4">
            <svg viewBox="0 0 56 62" className="h-[62px] w-14 shrink-0" aria-hidden="true">
              <circle cx="30.500" cy="37" r="25" fill="#cac7cb" />
              <ellipse cx="24.500" cy="31" rx="24.500" ry="26" fill="#06ba55" />
              <path d="M12.500 32l8.500 10L38 21.500" fill="none" stroke="#fff" strokeWidth="2.600" />
            </svg>
            <p className="text-[21px] leading-6">
              {lines.map((t) => (
                <span key={t} className="block">
                  {t}
                </span>
              ))}
            </p>
          </li>
        ))}
      </ul>
    </section>
  );
}

const concepts = [
  "Where Compute Engine fits within GCP",
  "Compute Engine as an infrastructure-centric solution",
  "Creating virtual machines",
  "Building virtual disks",
  "Compute Engine and networks",
  "GCP Pricing Calculator",
];

const darkButton =
  "rounded-[2px] border border-[#4a4a4a] bg-linear-to-b from-[#787878] to-[#545454] text-[13px] leading-5 font-bold text-white shadow-[0_1px_2px_rgba(0,0,0,0.3)]";

function CoursePage() {
  return (
    <main className="min-w-0 flex-1 overflow-hidden bg-white font-['Liberation_Sans',Arial,sans-serif] text-[#333333]">
      <div className="mx-auto max-w-[1200px]">
        <h1 className="-mt-[21px] border-b-2 border-dotted border-[#dddddd] pb-[9px] text-[28px] leading-8">
          Unit 4 - Week 2: Use GCP to build your apps
        </h1>
        <div className="mt-[9px] flex gap-[47px]">
          <div className="w-[217px] shrink-0 pt-px">
            <button type="button" className={`w-[202px] px-5 py-1 ${darkButton}`}>
              Register for Certification exam
            </button>
            <Outline />
          </div>
          <article className="min-w-0 flex-1 rounded-[4px] border border-[#eeeeee] bg-[#f9f9f9] px-[10px] pt-2 pb-10">
            <h2 className="text-[23px] leading-7">Exploring IaaS with Compute Engine [With Lab]</h2>
            <Slide />
            <div className="mt-[25px] flex justify-center">
              <button type="button" className={`px-[7px] py-1 ${darkButton}`}>
                Ask a question
              </button>
            </div>
            <p className="mt-[17px] text-[15px] leading-[19px] font-bold">
              To receive free Qwiklabs credits, please create a Qwiklabs account and fill the short form before midnight, March 2, 2020
              <br />
              <a href="#form" className="text-[#8800b3]">
                https://forms.gle/iUDcSAdhNL8Tv1uG7
              </a>
            </p>
            <div className="mt-9 text-[13px] leading-[18px]">
              <p>This lesson has:</p>
              <p className="mt-2 pl-[27px] font-bold">Concept:</p>
              <ul className="pl-[57px]">
                {concepts.map((c) => (
                  <li key={c}>{c}</li>
                ))}
              </ul>
            </div>
          </article>
        </div>
      </div>
    </main>
  );
}

function Scrollbar() {
  return (
    <div aria-hidden="true" className="flex w-[15px] shrink-0 flex-col items-center bg-[#f1f1f1] text-[#505050]">
      <svg viewBox="0 0 8 4" className="my-[6px] h-1 w-2">
        <path d="M0 4h8L4 0z" fill="currentColor" />
      </svg>
      <span className="flex-93" />
      <span className="w-[11px] flex-563 bg-[#c1c1c1]" />
      <span className="flex-261" />
      <svg viewBox="0 0 8 4" className="my-[6px] h-1 w-2">
        <path d="M0 0h8L4 4z" fill="currentColor" />
      </svg>
    </div>
  );
}

export default function App() {
  return (
    <div className="flex h-screen flex-col overflow-hidden bg-white">
      <TopBar />
      <div className="flex min-h-0 flex-1">
        <Dock />
        <div className="flex min-w-0 flex-1 flex-col font-['Noto_Sans',sans-serif]">
          <TabStrip />
          <Toolbar />
          <BookmarksBar />
          <div className="flex min-h-0 flex-1">
            <CoursePage />
            <Scrollbar />
          </div>
        </div>
      </div>
    </div>
  );
}
